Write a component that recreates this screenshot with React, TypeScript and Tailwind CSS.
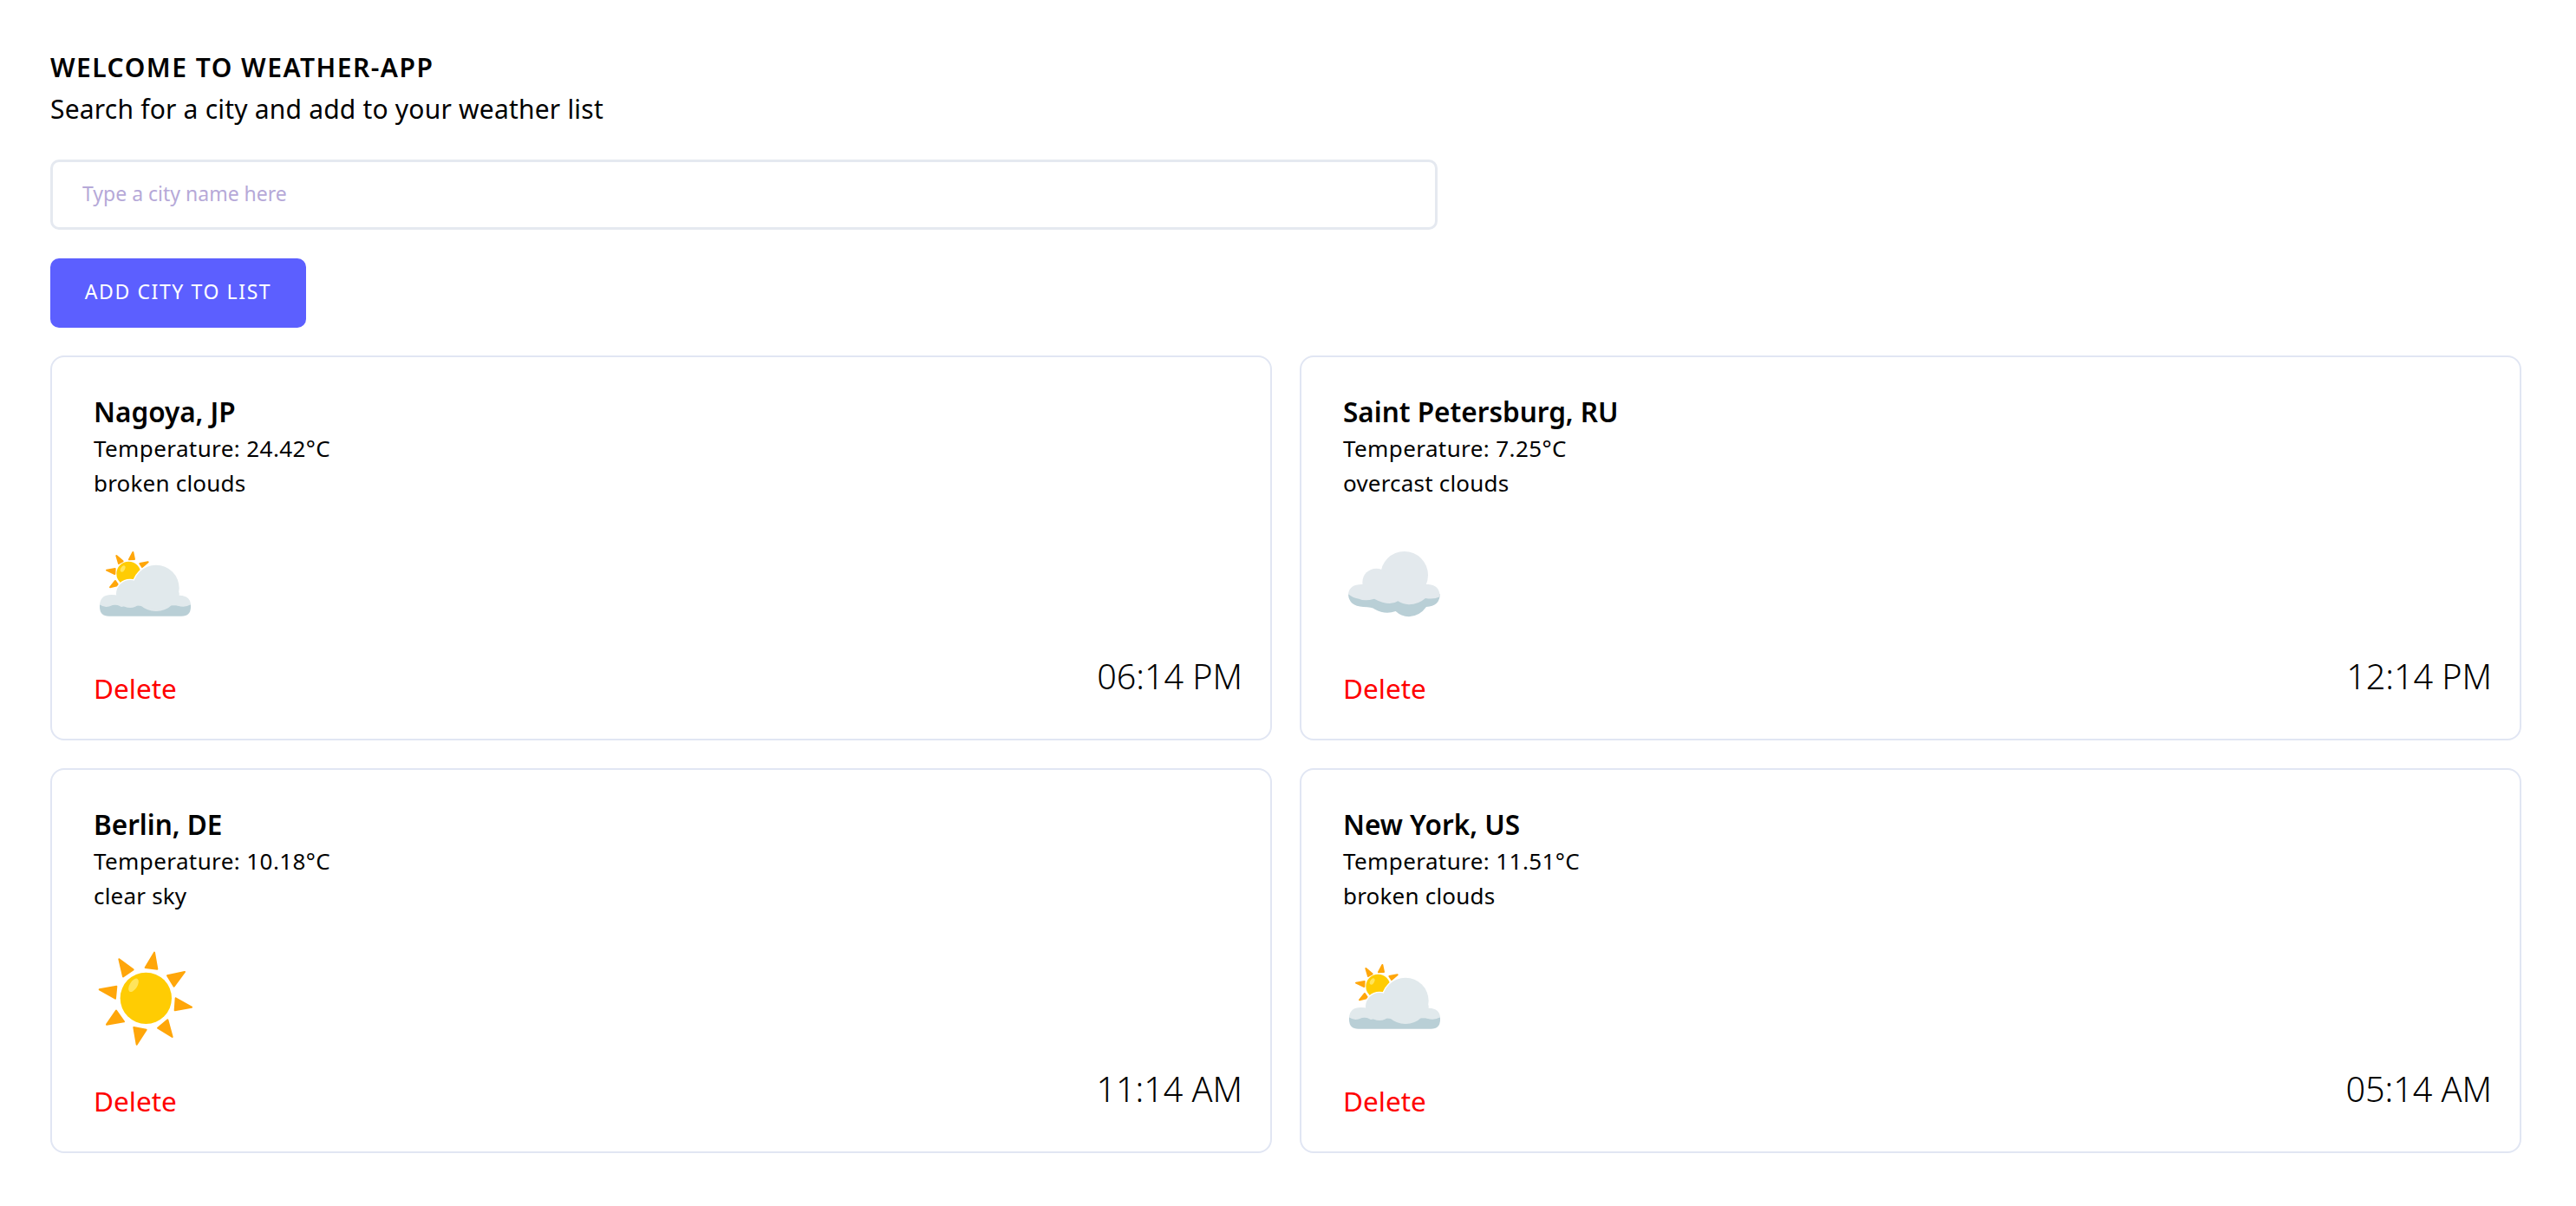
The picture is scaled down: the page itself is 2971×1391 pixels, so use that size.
const rayColor = "#ffa60a";

function Rays({ points }: { points: string[] }) {
  return (
    <g fill={rayColor} stroke={rayColor} strokeWidth="6" strokeLinejoin="round">
      {points.map((p) => (
        <polygon key={p} points={p} />
      ))}
    </g>
  );
}

function PartlyCloudy() {
  return (
    <svg viewBox="30 -36 408 408" className="w-[136px] h-[136px] block">
      <Rays
        points={[
          "133,63 155,82 141,90",
          "190,51 195,75 177,76",
          "242,85 222,102 214,90",
          "99,113 128,108 127,126",
          "111,172 129,150 139,165",
        ]}
      />
      <circle cx="175" cy="125" r="42" fill="#ffcc03" />
      <ellipse cx="155" cy="108" rx="7" ry="12" fill="#ffe45c" transform="rotate(30 155 108)" />
      <g fill="#fff" stroke="#fff" strokeWidth="8">
        <circle cx="270" cy="175" r="80" />
        <circle cx="180" cy="195" r="48" />
      </g>
      <path d="M75 232 H390 V240 Q390 272 358 272 H107 Q75 272 75 240 Z" fill="#b9cfd6" />
      <g fill="#e1e9ec">
        <circle cx="270" cy="175" r="80" />
        <circle cx="180" cy="195" r="48" />
        <path d="M75 232 Q78 198 115 198 Q145 198 160 215 H320 Q335 200 352 200 Q388 202 390 232 Q370 244 345 236 Q325 228 310 236 Q265 254 215 236 Q190 230 150 240 Q130 226 110 238 Q90 244 75 232 Z" />
        <rect x="150" y="190" width="200" height="45" />
      </g>
    </svg>
  );
}

function Overcast() {
  return (
    <svg viewBox="66 -36 408 408" className="w-[136px] h-[136px] block">
      <path d="M108 196 H425 Q425 238 378 240 Q355 272 318 274 Q290 272 272 255 Q235 268 200 248 Q190 240 160 240 Q110 238 108 196 Z" fill="#b9cfd6" />
      <g fill="#e3e9ed">
        <circle cx="302" cy="130" r="82" />
        <circle cx="205" cy="155" r="48" />
        <path d="M108 196 Q112 162 155 162 H385 Q425 165 425 205 Q405 215 375 210 Q350 232 318 232 Q295 230 280 220 Q250 240 198 212 Q165 222 145 212 Q125 210 108 196 Z" />
      </g>
    </svg>
  );
}

function Sunny() {
  return (
    <svg viewBox="30 9 408 408" className="w-[136px] h-[136px] block">
      <Rays
        points={[
          "142,76 191,112 156,136",
          "264,53 274,110 233,105",
          "369,120 332,170 309,133",
          "393,242 335,253 338,211",
          "326,345 276,314 310,286",
          "203,371 193,312 236,320",
          "99,302 132,254 159,292",
          "74,181 133,170 129,212",
        ]}
      />
      <circle cx="235" cy="211" r="89" fill="#ffcc03" />
      <ellipse cx="192" cy="166" rx="13" ry="26" fill="#ffe45c" transform="rotate(32 192 166)" />
    </svg>
  );
}

const cities = [
  { name: "Nagoya, JP", temp: "24.42", desc: "broken clouds", time: "06:14 PM", icon: <PartlyCloudy /> },
  { name: "Saint Petersburg, RU", temp: "7.25", desc: "overcast clouds", time: "12:14 PM", icon: <Overcast /> },
  { name: "Berlin, DE", temp: "10.18", desc: "clear sky", time: "11:14 AM", icon: <Sunny /> },
  { name: "New York, US", temp: "11.51", desc: "broken clouds", time: "05:14 AM", icon: <PartlyCloudy /> },
];

export default function App() {
  return (
    <div className="min-h-[1391px] bg-white text-black pt-[60px] pl-[58px] pr-[63px] font-['Noto_Sans',sans-serif]">
      <h1 className="text-[30px] leading-[36px] font-semibold tracking-[1.5px]">WELCOME TO WEATHER-APP</h1>
      <p className="text-[30px] leading-[44px] mt-[8px] font-normal tracking-[0.2px]">Search for a city and add to your weather list</p>
      <input
        placeholder="Type a city name here"
        className="block w-[1600px] h-[81px] mt-[36px] pl-[34px] pr-[34px] pb-[3px] border-[3px] border-[#e5e9f0] rounded-[10px] text-[23px] outline-none placeholder:text-[#b6a9d8]"
      />
      <button className="block w-[295px] h-[80px] mt-[33px] pb-[3px] bg-[#5c5fff] text-white rounded-[10px] text-[23px] tracking-[1.6px]">
        ADD CITY TO LIST
      </button>
      <div className="grid grid-cols-2 gap-[32px] mt-[32px]">
        {cities.map((c) => (
          <div key={c.name} className="h-[444px] border-2 border-[#e1e6f3] rounded-[16px] pl-[48px] pr-[32px] pt-[43px]">
            <h2 className="text-[31.5px] leading-[40px] font-semibold">{c.name}</h2>
            <p className="text-[26px] leading-[40px] mt-[2px] tracking-[0.4px]">Temperature: {c.temp}°C</p>
            <p className="text-[26px] leading-[40px] tracking-[0.2px]">{c.desc}</p>
            <div className="mt-[31px] -ml-[8px]">{c.icon}</div>
            <div className="flex justify-between items-start">
              <button className="text-[31.5px] leading-[44px] text-[#ff0000] mt-[28px]">Delete</button>
              <span className="text-[39.5px] leading-[54px] font-light text-black mt-[9px]">{c.time}</span>
            </div>
          </div>
        ))}
      </div>
    </div>
  );
}
